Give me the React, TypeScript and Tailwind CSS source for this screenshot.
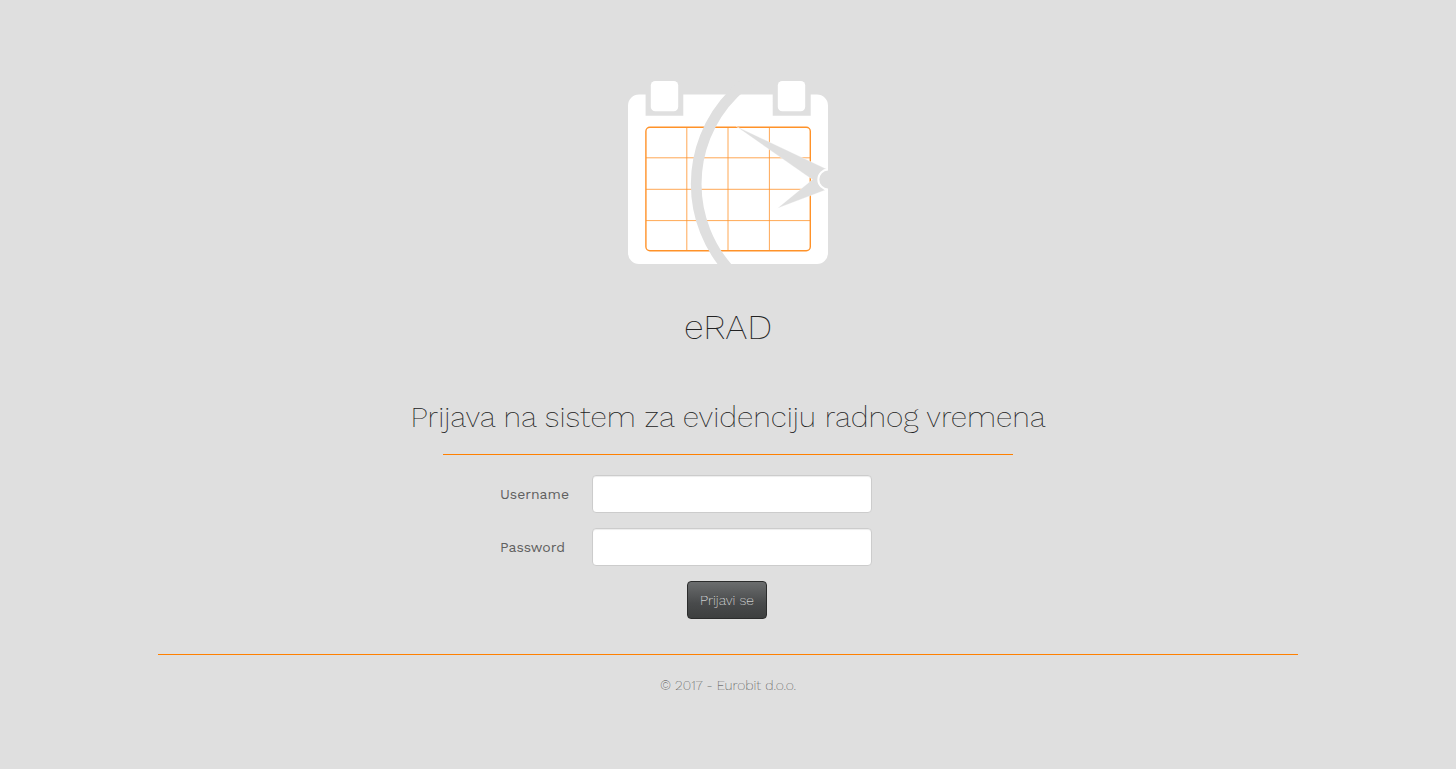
import React from "react";

function Logo() {
  return (
    <svg viewBox="0 0 200 183" className="block h-[183px] w-[200px]" role="img" aria-label="eRAD">
      <path
        fill="#fff"
        d="M11 13.5H17.6V34.7H55.3V13.5H144.7V34.7H182.7V13.5H189A11 11 0 0 1 200 24.5V172A11 11 0 0 1 189 183H11A11 11 0 0 1 0 172V24.5A11 11 0 0 1 11 13.5Z"
      />
      <rect x="22.8" y="0" width="27.4" height="30.2" rx="4.5" fill="#fff" />
      <rect x="149.8" y="0" width="27.4" height="30.2" rx="4.5" fill="#fff" />
      <g fill="none" stroke="#ff9229">
        <path
          strokeWidth="0.8"
          d="M58.8 46V170M100 46V170M141.4 46V170M18 76.8H182M18 108.3H182M18 139.6H182"
        />
        <rect x="17.9" y="46.3" width="164.4" height="123.4" rx="4" strokeWidth="1.4" />
      </g>
      <circle cx="196.2" cy="103" r="128" fill="none" stroke="#dfdfdf" strokeWidth="10.7" />
      <path fill="#dfdfdf" stroke="#fff" strokeWidth="0.3" d="M108 45.3L200 88.8V108L149.5 127.2L184.5 98.5L178 94.2Z" />
      <circle cx="200.3" cy="98.5" r="10" fill="#dfdfdf" stroke="#fff" strokeWidth="2" />
    </svg>
  );
}

function Field({ id, label, type }: { id: string; label: string; type: string }) {
  return (
    <div className="mb-[15px] flex items-center">
      <label htmlFor={id} className="w-[92px] text-sm font-normal text-[#606060]">
        {label}
      </label>
      <input
        id={id}
        name={id}
        type={type}
        className="h-[38px] w-[280px] rounded border border-[#ccc] bg-white px-3 text-sm text-[#555] shadow-[inset_0_1px_1px_rgba(0,0,0,0.075)]"
      />
    </div>
  );
}

export default function App() {
  return (
    <div className="min-h-screen bg-[#dfdfdf] px-4 pt-[81px] font-['Work_Sans',Inter,sans-serif] text-[#222]">
      <div className="mx-auto max-w-[1140px]">
        <main className="flex flex-col items-center">
          <Logo />
          <h1 className="mt-[43px] text-[36px] leading-10 font-extralight">eRAD</h1>
          <h2 className="mt-[50px] text-center text-[30px] leading-10 font-extralight">
            Prijava na sistem za evidenciju radnog vremena
          </h2>
          <hr className="mt-[17px] w-full max-w-[570px] border-[#ff8000]" />
          <form className="mt-5 w-full max-w-[456px]" onSubmit={(e) => e.preventDefault()}>
            <Field id="username" label="Username" type="text" />
            <Field id="password" label="Password" type="password" />
            <div className="flex justify-center pr-0.5">
              <button
                type="submit"
                className="h-[38px] rounded border border-[#2b2c2c] bg-linear-to-b from-[#6b6d6e] via-[#484a4b] via-60% to-[#3d3f3f] px-3 text-sm font-extralight text-white"
              >
                Prijavi se
              </button>
            </div>
          </form>
        </main>
        <hr className="mt-[35px] border-[#ff8000]" />
        <footer className="mt-5 pb-8 text-center text-sm font-extralight text-[#444]">
          © 2017 - Eurobit d.o.o.
        </footer>
      </div>
    </div>
  );
}
